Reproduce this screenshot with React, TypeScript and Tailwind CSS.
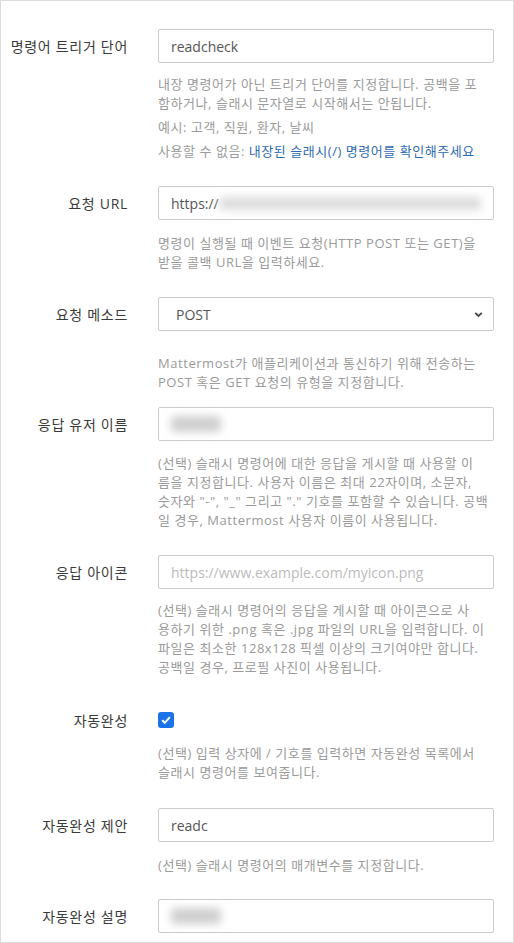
import React from 'react'

const font = "font-['Open_Sans','Noto_Sans_CJK_KR',sans-serif]"

function Label({ text }: { text: string }) {
  return (
    <div className="w-[127px] h-[34px] flex items-center justify-end text-[14px] tracking-[0.7px] text-[#3a3a3a]">
      {text}
    </div>
  )
}

function Help({ lines, className = '' }: { lines: React.ReactNode[]; className?: string }) {
  return (
    <div className={`text-[13px] leading-[19px] tracking-[0.55px] text-[#9a9a9a] ${className}`}>
      {lines.map((l, i) => (
        <div key={i} className="whitespace-nowrap">
          {l}
        </div>
      ))}
    </div>
  )
}

function TextBox({ children, placeholder }: { children?: React.ReactNode; placeholder?: string }) {
  return (
    <div className="h-[34px] w-[336px] border border-[#ccc] rounded-[2px] bg-white flex items-center px-[12px] text-[14px] text-[#555]">
      {children ?? <span className="text-[#bbb]">{placeholder}</span>}
    </div>
  )
}

function Blob({ w, h = 14, color = '#cfcfcf', blur = 'blur-[4px]' }: { w: number; h?: number; color?: string; blur?: string }) {
  return <span className={`inline-block rounded ${blur}`} style={{ width: w, height: h, background: color }} />
}

function Row({
  label,
  mt,
  control,
  help,
}: {
  label: string
  mt: string
  control: React.ReactNode
  help?: React.ReactNode
}) {
  return (
    <div className={`flex items-start ${mt}`}>
      <Label text={label} />
      <div className="ml-[30px] w-[336px]">
        {control}
        {help}
      </div>
    </div>
  )
}

export default function App() {
  return (
    <div className={`w-[514px] h-[943px] bg-white border border-[#dcdcdc] overflow-hidden pt-[28px] ${font}`}>
      <Row
        label="명령어 트리거 단어"
        mt=""
        control={<TextBox>readcheck</TextBox>}
        help={
          <div className="mt-[12px]">
            <Help
              lines={[
                '내장 명령어가 아닌 트리거 단어를 지정합니다. 공백을 포',
                '함하거나, 슬래시 문자열로 시작해서는 안됩니다.',
              ]}
            />
            <Help className="mt-[5px]" lines={['예시: 고객, 직원, 환자, 날씨']} />
            <Help
              className="mt-[5px]"
              lines={[
                <>
                  사용할 수 없음: <span className="text-[#2d6bb0]">내장된 슬래시(/) 명령어를 확인해주세요</span>
                </>,
              ]}
            />
          </div>
        }
      />

      <Row
        label="요청 URL"
        mt="mt-[25px]"
        control={
          <TextBox>
            <span>https://</span>
            <Blob w={266} h={13} color="#dcdcdc" blur="blur-[4px]" />
          </TextBox>
        }
        help={
          <Help
            className="mt-[14px]"
            lines={['명령이 실행될 때 이벤트 요청(HTTP POST 또는 GET)을', '받을 콜백 URL을 입력하세요.']}
          />
        }
      />

      <Row
        label="요청 메소드"
        mt="mt-[25px]"
        control={
          <div className="h-[34px] w-[336px] border border-[#ccc] rounded-[2px] bg-white flex items-center justify-between pl-[17px] pr-[10px] text-[14px] text-[#555]">
            <span>POST</span>
            <svg width="9" height="7" viewBox="0 0 9 7">
              <path d="M1.2 1.8 L4.5 5 L7.8 1.8" fill="none" stroke="#444" strokeWidth="1.8" />
            </svg>
          </div>
        }
        help={
          <Help
            className="mt-[23px]"
            lines={['Mattermost가 애플리케이션과 통신하기 위해 전송하는', 'POST 혹은 GET 요청의 유형을 지정합니다.']}
          />
        }
      />

      <Row
        label="응답 유저 이름"
        mt="mt-[15px]"
        control={
          <TextBox>
            <Blob w={50} h={16} />
          </TextBox>
        }
        help={
          <Help
            className="mt-[13px]"
            lines={[
              '(선택) 슬래시 명령어에 대한 응답을 게시할 때 사용할 이',
              '름을 지정합니다. 사용자 이름은 최대 22자이며, 소문자,',
              '숫자와 "-", "_" 그리고 "." 기호를 포함할 수 있습니다. 공백',
              '일 경우, Mattermost 사용자 이름이 사용됩니다.',
            ]}
          />
        }
      />

      <Row
        label="응답 아이콘"
        mt="mt-[25px]"
        control={<TextBox placeholder="https://www.example.com/myicon.png" />}
        help={
          <Help
            className="mt-[12px]"
            lines={[
              '(선택) 슬래시 명령어의 응답을 게시할 때 아이콘으로 사',
              '용하기 위한 .png 혹은 .jpg 파일의 URL을 입력합니다. 이',
              '파일은 최소한 128x128 픽셀 이상의 크기여야만 합니다.',
              '공백일 경우, 프로필 사진이 사용됩니다.',
            ]}
          />
        }
      />

      <Row
        label="자동완성"
        mt="mt-[26px]"
        control={
          <div className="h-[34px] flex items-center">
            <div className="w-[16px] h-[16px] rounded-[3px] bg-[#1a73e8] flex items-center justify-center">
              <svg width="12" height="12" viewBox="0 0 12 12">
                <path d="M2.2 6.2 L4.8 8.8 L9.8 3.2" fill="none" stroke="white" strokeWidth="2" />
              </svg>
            </div>
          </div>
        }
        help={
          <Help
            className="mt-[7px]"
            lines={['(선택) 입력 상자에 / 기호를 입력하면 자동완성 목록에서', '슬래시 명령어를 보여줍니다.']}
          />
        }
      />

      <Row
        label="자동완성 제안"
        mt="mt-[26px]"
        control={<TextBox>readc</TextBox>}
        help={<Help className="mt-[14px]" lines={['(선택) 슬래시 명령어의 매개변수를 지정합니다.']} />}
      />

      <Row
        label="자동완성 설명"
        mt="mt-[24px]"
        control={
          <TextBox>
            <Blob w={50} h={16} />
          </TextBox>
        }
      />
    </div>
  )
}
